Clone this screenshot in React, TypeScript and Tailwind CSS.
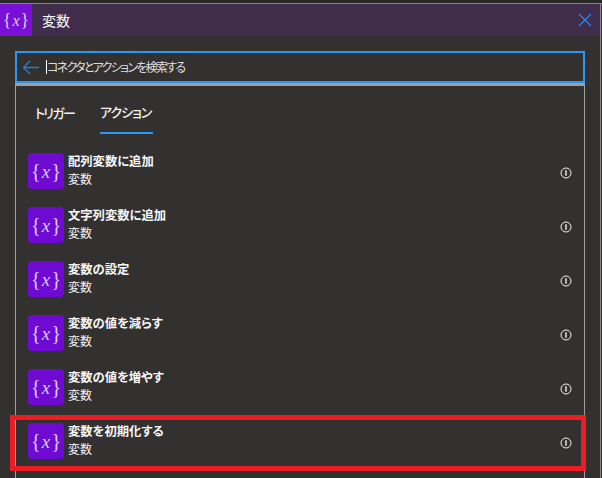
import React from 'react';

const actions = ['配列変数に追加', '文字列変数に追加', '変数の設定', '変数の値を減らす', '変数の値を増やす', '変数を初期化する'];

const VarGlyph: React.FC<{ size: string }> = ({ size }) => (
  <span className={`font-['Liberation_Serif',serif] font-normal text-[#dcc8f2] leading-none whitespace-nowrap ${size}`}>
    <span>{'{'}</span>
    <span className="italic text-[0.9em] mx-[1px]">x</span>
    <span>{'}'}</span>
  </span>
);

const InfoIcon = () => (
  <svg width="12" height="12" viewBox="0 0 12 12" fill="none" className="shrink-0">
    <circle cx="6" cy="6" r="5" stroke="#f3f2f1" strokeWidth="1" />
    <path d="M6 3.2v5.6" stroke="#f3f2f1" strokeWidth="1.4" />
  </svg>
);

const ActionRow: React.FC<{ title: string }> = ({ title }) => (
  <div className="h-[54px] flex items-start pl-3 pr-3">
    <div className="w-9 h-9 rounded-sm bg-[#6e0ad2] flex items-center justify-center shrink-0">
      <VarGlyph size="text-[21px]" />
    </div>
    <div className="ml-1 flex-1 flex flex-col -mt-[1px]">
      <span className="text-[12.3px] leading-[18px] font-semibold text-[#f8f8f8]">{title}</span>
      <span className="text-[12px] leading-[18px] text-[#f3f2f1]">変数</span>
    </div>
    <div className="mt-[14px] mr-0">
      <InfoIcon />
    </div>
  </div>
);

export default function App() {
  return (
    <div className="relative w-[602px] h-[478px] overflow-hidden bg-[#323130] font-['Noto_Sans_CJK_JP',sans-serif] [font-feature-settings:'palt']">
      <div className="h-[3px] bg-[#292827]" />
      <div className="h-[1px] bg-[#8a8886]" />
      <div className="h-[32px] bg-[#402c4b] flex items-center">
        <div className="w-8 h-8 bg-[#7a0fd6] flex items-center justify-center">
          <VarGlyph size="text-[18px]" />
        </div>
        <span className="ml-[10px] text-[14px] text-white">変数</span>
        <svg width="14" height="14" viewBox="0 0 14 14" className="ml-auto mr-[10px]" fill="none">
          <path d="M1 1l12 12M13 1L1 13" stroke="#2b88f0" strokeWidth="1.2" />
        </svg>
      </div>
      <div className="pt-[15px] pl-[15px] w-[585px]">
        <div className="h-[32px] border-2 border-[#2899f5] flex items-center">
          <svg width="17" height="15" viewBox="0 0 17 15" fill="none" className="ml-[5px]">
            <path d="M17 7.5H1.5M8 1L1.5 7.5L8 14" stroke="#2480c8" strokeWidth="1.3" />
          </svg>
          <span className="ml-[7px] w-px h-[14px] bg-white" />
          <span className="text-[12px] tracking-[-1.7px] text-[#e1dfdd]">コネクタとアクションを検索する</span>
        </div>
        <div className="h-[3px] bg-[#a19f9d]" />
        <div className="border-x border-[#a19f9d] h-[400px]">
          <div className="h-[48px] flex items-end pl-[19px] text-[13px] font-medium text-[#f3f2f1]">
            <span className="h-[42px] w-[41px] flex items-center mr-6 tracking-[-1.7px] whitespace-nowrap">トリガー</span>
            <span className="h-[42px] w-[53px] flex items-center border-b-2 border-[#2899f5] tracking-[-1px] whitespace-nowrap">アクション</span>
          </div>
          <div className="pt-[19px]">
            {actions.map((title) => (
              <ActionRow key={title} title={title} />
            ))}
          </div>
        </div>
      </div>
      <div className="absolute right-[1px] top-[3px] bottom-0 w-px bg-[#8a8886]" />
      <div className="absolute left-[10px] top-[415px] w-[576px] h-[56px] border-[5px] border-[#ed1c24]" />
    </div>
  );
}
